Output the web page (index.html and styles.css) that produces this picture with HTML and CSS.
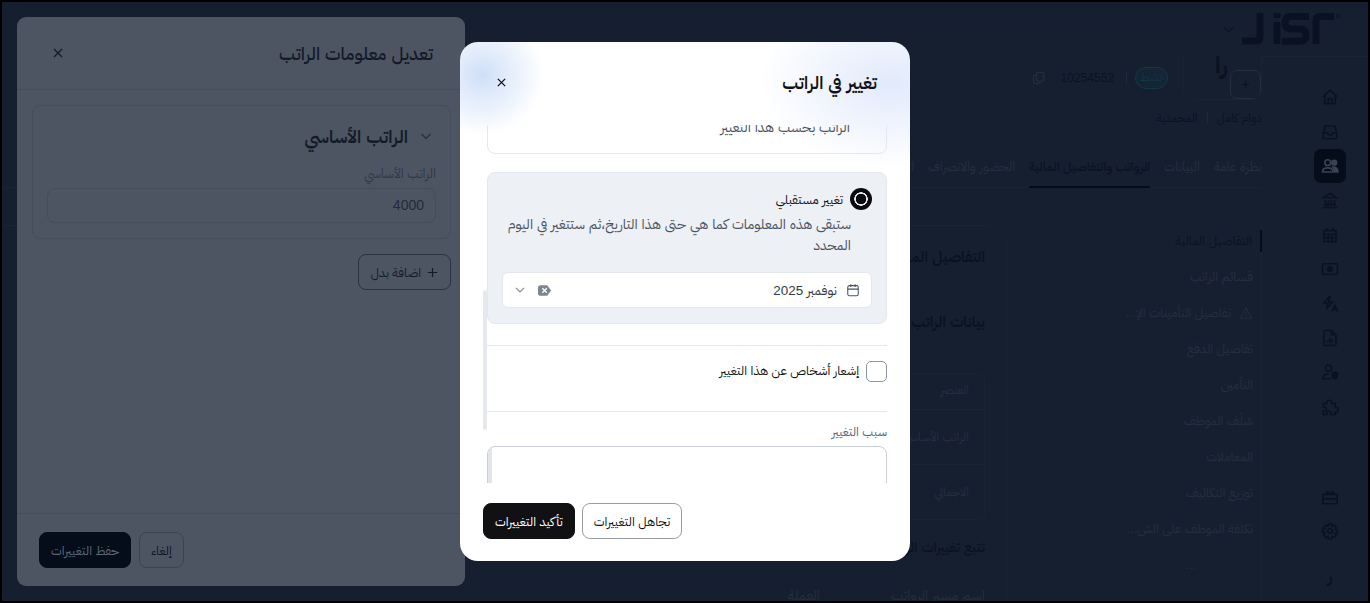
FILE: index.html
```html
<!DOCTYPE html>
<html lang="ar" dir="rtl">

<head>
    <meta charset="UTF-8" />
    <title>تغيير في الراتب</title>
    <link rel="stylesheet" href="styles.css">
</head>

<body>
    <div class="screen">
        <!-- page behind the overlays -->
        <div class="topbar">
            <svg class="logo" viewBox="0 0 100 32">
                <path d="M0 28h14q4 0 4-4V0" />
                <path d="M35 9v22M35 0v5" />
                <path d="M67 3.500H49q-6 0-6 6.200t6 6.200h9q6 0 6 6t-6 6.300H40" />
                <path d="M92 3.500H78q-4 0-4 4V31" />
                <circle class="logo-mark" cx="96" cy="3" r="2" />
            </svg>
            <svg class="top-chevron" viewBox="0 0 12 12"><path d="M1 3.500l5 5 5-5" /></svg>
        </div>
        <div class="page">
            <aside class="rail">
                <nav class="rail-icons">
                    <a class="rail-icon"><svg viewBox="0 0 24 24"><path d="M2.500 11.500L12 3l9.500 8.500M5 9.500V21h14V9.500M9.500 21v-6.500h5V21" /></svg></a>
                    <a class="rail-icon"><svg viewBox="0 0 24 24"><path d="M3 13l2.500-9h13L21 13v6a2 2 0 0 1-2 2H5a2 2 0 0 1-2-2zM3 13h5.500l1.500 3h4l1.500-3H21" /></svg></a>
                    <a class="rail-icon rail-icon-on"><svg viewBox="0 0 24 24"><circle cx="9" cy="7.500" r="3.800" /><circle class="solid" cx="17.500" cy="7.500" r="3.200" /><path d="M2 20c0-4 3-5.500 7-5.500s7 1.500 7 5.500z" /><path class="solid" d="M16 13.500c4 0 6.500 1.500 6.500 6.500H18c0-3-.5-5-2-6.500z" /></svg></a>
                    <a class="rail-icon"><svg viewBox="0 0 24 24"><path d="M3 9l9-6 9 6zM6 12v6M10 12v6M14 12v6M18 12v6M4 18.500h16M2 22h20" /></svg></a>
                    <a class="rail-icon"><svg viewBox="0 0 24 24"><path d="M4 6h16v15H4zM8 2.500V7M16 2.500V7M4 11h16M4 16h16M9.500 11v10M14.500 11v10" /></svg></a>
                    <a class="rail-icon"><svg viewBox="0 0 24 24"><rect x="2" y="5" width="20" height="14" rx="2" /><circle class="solid" cx="12" cy="12" r="3" /></svg></a>
                    <a class="rail-icon"><svg viewBox="0 0 24 24"><path d="M11 2L4 11h5l-2 8 8-10h-5l2-7zM15 22l3.500-8 3.500 8M16 19.500h5" /></svg></a>
                    <a class="rail-icon"><svg viewBox="0 0 24 24"><path d="M6 2h8l6 6v12a2 2 0 0 1-2 2H6a2 2 0 0 1-2-2V4a2 2 0 0 1 2-2zM14 2v6h6M9 18v-3M12 18v-6M15 18v-4" /></svg></a>
                    <a class="rail-icon"><svg viewBox="0 0 24 24"><circle cx="10" cy="7" r="4" /><path d="M2.500 21c0-4.500 3-6.500 8-6.500M2.500 21h11" /><path class="solid" d="M15 13.500l3.500-1.200 3.500 1.200v3.500c0 2-1.500 3-3.500 4-2-1-3.500-2-3.500-4z" /></svg></a>
                    <a class="rail-icon"><svg viewBox="0 0 24 24"><path d="M3 7.500h5V6a3 3 0 0 1 6 0v1.500h5v5h1a3 3 0 0 1 0 6h-1V22h-6v-2a2.500 2.500 0 0 0-5 0v2H3v-5h1.500a2.500 2.500 0 0 0 0-5H3z" /></svg></a>
                </nav>
                <nav class="rail-icons rail-bottom">
                    <a class="rail-icon"><svg viewBox="0 0 24 24"><path d="M2.500 8.500h19V21h-19zM2.500 14.500h19M12 8.500L8 3.500M12 8.500l4-5M12 8.500L6 6.500M12 8.500l6-2" /></svg></a>
                    <a class="rail-icon"><svg viewBox="0 0 24 24"><circle cx="12" cy="12" r="3" /><path d="M10 2.500h4l.7 3 2.700-1.300 2.800 2.800-1.400 2.700 3 .8v4l-3 .8 1.400 2.700-2.800 2.800-2.700-1.300-.7 3h-4l-.7-3-2.700 1.300L3.800 17l1.400-2.700-3-.8v-4l3-.8L3.800 7l2.800-2.800 2.700 1.300z" /></svg></a>
                </nav>
                <span class="avatar-letter">ر</span>
            </aside>

            <main class="main">
                <section class="profile">
                    <div class="profile-row">
                        <div class="photo">
                            <span class="photo-letter">را</span>
                            <span class="photo-add">+</span>
                        </div>
                        <span class="status">نشط</span>
                        <i class="v-line"></i>
                        <span class="emp-id">10254552</span>
                        <svg class="copy" viewBox="0 0 16 16"><rect x="5.500" y="1" width="9" height="11" rx="2.500" /><path d="M5.500 4.500H4a2 2 0 0 0-2 2V13a2 2 0 0 0 2 2h4a2 2 0 0 0 2-2v-1" /></svg>
                    </div>
                    <div class="profile-meta"><span>دوام كامل</span><i class="v-line"></i><span>المحمدية</span></div>
                </section>
                <div class="tabs">
                    <a>نظرة عامة</a>
                    <a>البيانات</a>
                    <a class="tab-on">الرواتب والتفاصيل المالية</a>
                    <a>الحضور والانصراف</a>
                    <a>الإجازات</a>
                </div>
                <div class="content">
                    <ul class="side-menu">
                        <li class="menu-on"><span>التفاصيل المالية</span></li>
                        <li><span>قسائم الراتب</span></li>
                        <li><span class="with-icon"><svg class="warn" viewBox="0 0 16 16"><path d="M8 2l6.500 12h-13zM8 6.500v4M8 11.800v.7" /></svg>تفاصيل التأمينات الإ...</span></li>
                        <li><span>تفاصيل الدفع</span></li>
                        <li><span>التأمين</span></li>
                        <li><span>سُلَف الموظف</span></li>
                        <li><span>المعاملات</span></li>
                        <li><span>توزيع التكاليف</span></li>
                        <li><span>تكلفة الموظف على الش...</span></li>
                        <li class="menu-more"><span>...</span></li>
                    </ul>
                    <div class="panel">
                        <h3>التفاصيل المالية</h3>
                        <h3 class="panel-gap">بيانات الراتب</h3>
                        <div class="mini-table">
                            <div class="mini-head">العنصر</div>
                            <div class="mini-row">الراتب الأساسي</div>
                            <div class="mini-row">الاجمالي</div>
                        </div>
                        <h4>تتبع تغييرات الراتب</h4>
                        <div class="panel-foot"><span>اسم مسير الرواتب</span><span>العملة</span></div>
                    </div>
                </div>
            </main>
        </div>

        <!-- edit salary drawer, dimmed -->
        <div class="drawer">
            <header class="drawer-head">
                <h2>تعديل معلومات الراتب</h2>
                <svg class="x-icon" viewBox="0 0 12 12"><path d="M2 2l8 8M10 2l-8 8" /></svg>
            </header>
            <div class="drawer-body">
                <div class="salary-card">
                    <div class="salary-title">
                        <svg class="chev" viewBox="0 0 12 12"><path d="M1.500 4l4.500 4.500L10.500 4" /></svg>
                        <span>الراتب الأساسي</span>
                    </div>
                    <label class="dim-label">الراتب الأساسي</label>
                    <div class="dim-input">4000</div>
                </div>
                <button class="add-btn"><svg viewBox="0 0 12 12"><path d="M6 1v10M1 6h10" /></svg>اضافة بدل</button>
            </div>
            <footer class="drawer-foot">
                <button class="dim-btn">إلغاء</button>
                <button class="dim-btn dim-btn-solid">حفظ التغييرات</button>
            </footer>
        </div>

        <!-- change dialog -->
        <div class="modal">
            <header class="modal-head">
                <h2>تغيير في الراتب</h2>
                <svg class="x-icon x-dark" viewBox="0 0 12 12"><path d="M2 2l8 8M10 2l-8 8" /></svg>
            </header>
            <div class="modal-scroll">
                <div class="scroll-thumb"></div>
                <div class="scroll-inner">
                    <div class="option">
                        <p class="option-text">الراتب بحسب هذا التغيير</p>
                    </div>
                    <div class="option option-on">
                        <div class="option-title">
                            <span class="radio"></span>
                            <span>تغيير مستقبلي</span>
                        </div>
                        <p class="option-text">ستبقى هذه المعلومات كما هي حتى هذا التاريخ،ثم ستتغير في اليوم المحدد</p>
                        <div class="date-select">
                            <svg class="cal" viewBox="0 0 16 16"><rect x="2" y="3" width="12" height="11.500" rx="2" /><path d="M2 7h12M5.500 1.500v3M10.500 1.500v3" /></svg>
                            <span class="date-value">نوفمبر 2025</span>
                            <svg class="clear" viewBox="0 0 16 12"><path class="clear-bg" d="M3 0h7.500L15 6l-4.500 6H3a3 3 0 0 1-3-3V3a3 3 0 0 1 3-3z" /><path class="clear-x" d="M5 3.500l5 5M10 3.500l-5 5" /></svg>
                            <svg class="select-chev" viewBox="0 0 12 12"><path d="M2 4l4 4 4-4" /></svg>
                        </div>
                    </div>
                    <div class="notify">
                        <span class="checkbox"></span>
                        <span>إشعار أشخاص عن هذا التغيير</span>
                    </div>
                    <label class="reason-label">سبب التغيير</label>
                    <div class="reason-box"><span class="reason-bar"></span></div>
                </div>
            </div>
            <footer class="modal-foot">
                <button class="btn">تجاهل التغييرات</button>
                <button class="btn btn-solid">تأكيد التغييرات</button>
            </footer>
        </div>
    </div>
</body>

</html>
```

FILE: styles.css
```css
* {
    box-sizing: border-box;
}

body {
    margin: 0;
    font-family: "Liberation Sans", "IBM Plex Sans Arabic", "Noto Sans Arabic", "DejaVu Sans", sans-serif;
    font-size: 13px;
    overflow: hidden;
}

button {
    font-family: inherit;
}

h2,
h3,
h4,
p,
ul {
    margin: 0;
    padding: 0;
}

svg {
    display: block;
    flex-shrink: 0;
    fill: none;
    stroke: currentColor;
}

.screen {
    position: relative;
    display: flex;
    flex-direction: column;
    width: 1370px;
    height: 603px;
    border: 2px solid #000;
    background: #161f30;
    color: #0a1222;
    overflow: hidden;
}

/* page behind */
.topbar {
    display: flex;
    align-items: center;
    flex-shrink: 0;
    height: 54px;
    padding-right: 26px;
}

.logo {
    width: 100px;
    height: 32px;
    stroke-width: 7;
}

.logo-mark {
    stroke-width: 1;
}

.top-chevron {
    width: 11px;
    height: 11px;
    margin-right: 8px;
    stroke-width: 1.200;
}

.page {
    flex: 1;
    display: flex;
    min-height: 0;
}

.rail {
    width: 106px;
    flex-shrink: 0;
    padding: 23px 22px 0 0;
    border-top: 1px solid #1a2334;
}

.rail-icons {
    display: flex;
    flex-direction: column;
    width: 32px;
}

.rail-bottom {
    margin-top: 56px;
}

.rail-icon {
    display: flex;
    align-items: center;
    justify-content: center;
    height: 34.400px;
    border-radius: 7px;
}

.rail-icon svg {
    width: 18px;
    height: 18px;
    stroke-width: 2.200;
}

.rail-icon .solid {
    fill: currentColor;
}

.rail-icon-on {
    background: #050c1a;
    color: #3a4352;
}

.avatar-letter {
    display: block;
    width: 32px;
    margin-top: 18px;
    text-align: center;
    font-size: 17px;
    font-weight: 700;
    line-height: 20px;
}

.main {
    flex: 1;
    min-width: 0;
    overflow: hidden;
    color: #252e3f;
}

.profile-row {
    display: flex;
    align-items: center;
    height: 44px;
}

.photo {
    position: relative;
    width: 79px;
    height: 44px;
    border: 1px solid #1a2334;
    border-top: 0;
    border-radius: 0 0 10px 10px;
    overflow: hidden;
}

.photo-letter {
    display: block;
    margin: -5px 33px 0 0;
    color: #0a1222;
    font-size: 24px;
    font-weight: 700;
    line-height: 28px;
}

.photo-add {
    position: absolute;
    right: 0;
    bottom: 0;
    width: 31px;
    height: 29px;
    border: 1px solid #252e3f;
    border-radius: 7px;
    color: #0a1222;
    font-size: 14px;
    line-height: 27px;
    text-align: center;
}

.status {
    width: 33px;
    height: 22px;
    margin-right: 15px;
    border: 1px solid #0f3d3c;
    border-radius: 11px;
    background: #152436;
    color: #0f3a3e;
    font-size: 12px;
    line-height: 19px;
    text-align: center;
}

.v-line {
    display: block;
    width: 1px;
    height: 12px;
    background: #1f283a;
}

.profile-row .v-line {
    margin-right: 8px;
    height: 14px;
}

.emp-id {
    margin-right: 12px;
    font-size: 12px;
    color: #0a1222;
}

.copy {
    width: 13px;
    height: 14px;
    margin-right: 16px;
    stroke-width: 1.500;
}

.profile-meta {
    display: flex;
    align-items: center;
    gap: 9px;
    margin-top: 10px;
    font-size: 12px;
    line-height: 16px;
    color: #0a1222;
}

.tabs {
    display: flex;
    gap: 14px;
    height: 38px;
    margin-top: 24px;
    border-bottom: 1px solid #1a2334;
    font-size: 13px;
    line-height: 20px;
    white-space: nowrap;
}

.tabs a {
    padding-top: 7px;
}

.tab-on {
    height: 38px;
    border-bottom: 2px solid #050c1a;
    color: #0a1222;
    font-size: 12.500px;
    font-weight: 500;
}

.content {
    display: flex;
    font-size: 12.800px;
}

.side-menu {
    width: 255px;
    flex-shrink: 0;
    margin-top: 34.500px;
    border-right: 1px solid #1a2334;
    list-style: none;
    white-space: nowrap;
}

.side-menu li {
    display: flex;
    align-items: center;
    height: 36px;
}

.side-menu span {
    padding-right: 8px;
}

.menu-on span {
    margin-right: -1px;
    border-right: 2px solid #050c1a;
    color: #0a1222;
    line-height: 22px;
}

.with-icon {
    display: flex;
    align-items: center;
    gap: 8px;
}

.warn {
    width: 14px;
    height: 14px;
}

.menu-more span {
    padding-right: 65px;
}

.panel {
    flex: 1;
    height: 400px;
    margin-top: 37px;
    padding: 21px 21px 0 0;
    border: 1px solid #1a2334;
    border-left: 0;
    border-bottom: 0;
    border-radius: 0 16px 0 0;
}

.panel h3 {
    color: #0a1222;
    font-size: 15px;
    font-weight: 600;
    line-height: 20px;
}

.panel .panel-gap {
    margin-top: 45px;
}

.mini-table {
    width: 400px;
    margin-top: 41px;
    border: 1px solid #1a2334;
    border-radius: 6px;
    font-size: 12px;
}

.mini-head {
    height: 35px;
    padding-right: 15px;
    line-height: 33px;
}

.mini-row {
    height: 55px;
    padding-right: 15px;
    border-top: 1px solid #1a2334;
    line-height: 54px;
}

.panel h4 {
    margin-top: 17px;
    color: #0a1222;
    font-size: 14px;
    font-weight: 500;
    line-height: 20px;
}

.panel-foot {
    display: flex;
    margin-top: 28px;
    font-size: 14px;
    line-height: 20px;
}

.panel-foot span:first-child {
    width: 165px;
}

/* dimmed drawer */
.drawer {
    position: absolute;
    top: 15px;
    left: 15px;
    display: flex;
    flex-direction: column;
    width: 448px;
    height: 569px;
    border-radius: 9px;
    background: #4d5562;
    color: #131a29;
}

.drawer-head {
    display: flex;
    align-items: center;
    justify-content: space-between;
    height: 73px;
    padding: 0 32px 0 35px;
    border-bottom: 1px solid #454d5b;
}

.drawer-head h2 {
    font-size: 18px;
    font-weight: 500;
}

.modal-head h2 {
    font-size: 17.700px;
    font-weight: 600;
    margin-top: -2px;
}

.x-icon {
    width: 12px;
    height: 12px;
    stroke-width: 1.300;
}

.drawer-body {
    flex: 1;
    padding: 15px 14px 0 15px;
}

.salary-card {
    height: 134px;
    padding: 15px 14px 0;
    border: 1px solid #454d5b;
    border-radius: 8px;
}

.salary-title {
    display: flex;
    align-items: center;
    gap: 12px;
    height: 30px;
    padding-right: 4px;
    font-size: 18px;
    font-weight: 600;
}

.chev {
    width: 12px;
    height: 12px;
    stroke-width: 1.500;
    color: #2a3241;
}

.dim-label {
    display: block;
    margin-top: 13px;
    color: #30384a;
    font-size: 13px;
    line-height: 20px;
}

.dim-input {
    height: 35px;
    margin-top: 4px;
    padding: 0 11px;
    border: 1px solid #454d5b;
    border-radius: 8px;
    color: #232b3b;
    font-size: 14px;
    line-height: 33px;
}

.add-btn {
    display: flex;
    align-items: center;
    gap: 6px;
    height: 36px;
    margin-top: 15px;
    padding: 0 12px;
    border: 1px solid #2a3241;
    border-radius: 8px;
    background: transparent;
    color: #131a29;
    font-size: 12.600px;
}

.add-btn svg {
    width: 11px;
    height: 11px;
    stroke-width: 1.300;
}

.drawer-foot {
    display: flex;
    justify-content: flex-end;
    gap: 8px;
    height: 73px;
    padding: 18px 0 0 22px;
    border-top: 1px solid #454d5b;
}

.dim-btn {
    height: 36px;
    padding: 0 11px;
    border: 1px solid #3c4453;
    border-radius: 8px;
    background: transparent;
    color: #0f1626;
    font-size: 12.700px;
}

.dim-btn-solid {
    border-color: #050c1a;
    background: #050c1a;
    color: #5f6875;
}

/* change dialog */
.modal {
    position: absolute;
    top: 40px;
    left: 458px;
    display: flex;
    flex-direction: column;
    width: 450px;
    height: 519px;
    border-radius: 18px;
    background:
        radial-gradient(ellipse 62px 60px at 22px 33px, #cfdff8 0%, rgba(207, 223, 248, 0.5) 50%, rgba(207, 223, 248, 0) 100%),
        radial-gradient(ellipse 130px 85px at 430px 41px, #e1e9fb 0%, rgba(225, 233, 251, 0.5) 50%, rgba(225, 233, 251, 0) 100%),
        #fff;
    color: #111;
}

.modal-head {
    display: flex;
    align-items: center;
    justify-content: space-between;
    flex-shrink: 0;
    height: 83px;
    padding: 0 33px 0 36px;
}

.x-dark {
    width: 11px;
    height: 11px;
    margin-top: -2px;
    stroke-width: 1.400;
}

.modal-scroll {
    position: relative;
    height: 358px;
    padding: 0 23px;
    overflow: hidden;
}

.scroll-thumb {
    position: absolute;
    top: 165px;
    left: 23px;
    width: 4px;
    height: 140px;
    border-radius: 2px;
    background: #e5e8ec;
}

.scroll-inner {
    margin-top: -40px;
    padding-left: 4px;
}

.option {
    padding: 15px 36px 15px 15px;
    border: 1px solid #e4e7ec;
    border-radius: 8px;
}

.option + .option {
    margin-top: 18px;
}

.option-text {
    color: #4b5361;
    font-size: 14px;
    line-height: 21px;
}

.option > .option-text:only-child {
    padding-top: 16px;
}

.option-on {
    height: 152px;
    padding: 15px 14px 15px 14px;
    background: #edf0f4;
}

.option-on .option-text {
    margin-top: 4px;
    padding: 0 21px 0 1px;
}

.option-title {
    display: flex;
    align-items: center;
    gap: 7px;
    height: 22px;
    color: #111;
    font-size: 12.800px;
}

.radio {
    width: 22px;
    height: 22px;
    flex-shrink: 0;
    border-radius: 50%;
    background: radial-gradient(circle, #0b0b0f 0 5px, #e6e8ec 5.500px 6.500px, #0b0b0f 7px);
}

.date-select {
    display: flex;
    align-items: center;
    height: 36px;
    margin-top: 16px;
    padding: 0 11px;
    border: 1px solid #e4e7ec;
    border-radius: 6px;
    background: #fff;
}

.cal {
    width: 14px;
    height: 14px;
    stroke-width: 1.200;
    color: #4b5361;
}

.date-value {
    margin-right: 9px;
    color: #333a47;
    font-size: 13.400px;
}

.clear {
    width: 14px;
    height: 11px;
    margin-right: auto;
    stroke: none;
}

.clear-bg {
    fill: #7d8593;
}

.clear-x {
    stroke: #fff;
    stroke-width: 1.500;
}

.select-chev {
    width: 12px;
    height: 12px;
    margin-right: 12px;
    stroke-width: 1.200;
    color: #8a919d;
}

.notify {
    display: flex;
    align-items: flex-start;
    gap: 7px;
    height: 67px;
    margin-top: 21px;
    padding-top: 15px;
    border-top: 1px solid #e4e7ec;
    border-bottom: 1px solid #e4e7ec;
    font-size: 12.700px;
    line-height: 21px;
}

.checkbox {
    width: 21px;
    height: 21px;
    flex-shrink: 0;
    border: 1px solid #8d95a3;
    border-radius: 5px;
}

.reason-label {
    display: block;
    margin-top: 10px;
    color: #5b6472;
    font-size: 12.500px;
    line-height: 20px;
}

.reason-box {
    position: relative;
    height: 100px;
    margin-top: 4px;
    border: 1px solid #c9ced8;
    border-radius: 8px;
    overflow: hidden;
}

.reason-bar {
    display: block;
    position: absolute;
    top: 0;
    left: 0;
    width: 4px;
    height: 100%;
    background: #e2e6eb;
}

.modal-foot {
    display: flex;
    justify-content: flex-end;
    gap: 7px;
    padding: 20px 0 0 23px;
}

.btn {
    height: 36px;
    padding: 0 11px;
    border: 1px solid #9b9ba6;
    border-radius: 8px;
    background: #fff;
    color: #111;
    font-size: 12.700px;
}

.btn-solid {
    border-color: #111114;
    background: #111114;
    color: #fff;
}
```
